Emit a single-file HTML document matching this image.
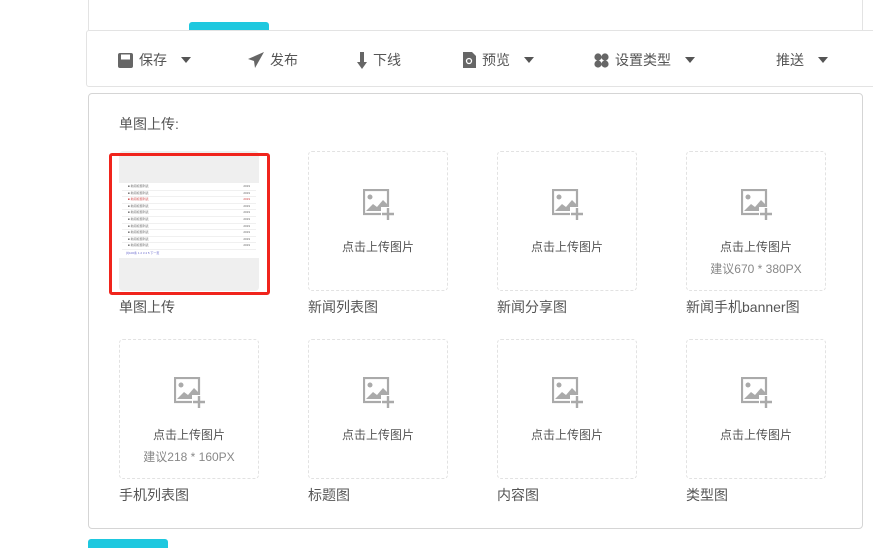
<!DOCTYPE html>
<html><head><meta charset="utf-8"><style>
*{margin:0;padding:0;box-sizing:border-box}
body{width:873px;height:548px;background:#fff;position:relative;overflow:hidden;font-family:"Liberation Sans","Noto Sans CJK SC",sans-serif;color:#555}
.abs{position:absolute}
.tb{position:absolute;top:30px;left:86px;width:800px;height:57px;border:1px solid #e3e3e3;border-radius:3px;background:#fff}
.tbi{position:absolute;top:20px;font-size:14px;color:#555;display:flex;align-items:center;gap:6px;height:18px}
.tri{width:0;height:0;border-left:5px solid transparent;border-right:5px solid transparent;border-top:6px solid #555;margin-left:8px}
.panel{position:absolute;left:88px;top:93px;width:775px;height:436px;border:1px solid #d5d5d5;border-radius:4px}
.tile{position:absolute;width:140px;height:140px;border:1px dashed #e2e2e2;border-radius:4px;text-align:center;font-size:12px;color:#555}
.tile svg{position:absolute;left:54px;top:37px}
.t1{position:absolute;left:0;right:0;top:86px}
.t2{position:absolute;left:0;right:0;top:108px;color:#888}
.lab{position:absolute;font-size:14px;color:#555}
.row{height:6.6px;border-bottom:1px solid #f0f0f0;display:flex;justify-content:space-between;font-size:3px;line-height:5px;padding:0 6px;color:#666;overflow:hidden}
</style></head><body>
<div class="abs" style="left:88px;top:0;width:775px;height:30px;border-left:1px solid #e3e3e3;border-right:1px solid #e3e3e3"></div>
<div class="abs" style="left:189px;top:22px;width:80px;height:9px;background:#1ec8df;border-radius:3px 3px 0 0"></div>
<div class="tb">
<div class="tbi" style="left:31px"><svg width="15" height="15"><rect x="0" y="0" width="15" height="15" rx="2" fill="#666"/><rect x="3" y="1.5" width="9" height="5" fill="#fff"/></svg>保存<span class="tri"></span></div>
<div class="tbi" style="left:161px"><svg width="16" height="16"><path d="M16 0L0 7l6 2 1 7z" fill="#666"/></svg>发布</div>
<div class="tbi" style="left:270px"><svg width="10" height="17"><rect x="3" y="0" width="4" height="11" fill="#666"/><path d="M0 10h10l-5 7z" fill="#666"/></svg>下线</div>
<div class="tbi" style="left:376px"><svg width="13" height="16"><path d="M0 0h9l4 4v12H0z" fill="#666"/><circle cx="6" cy="9" r="2.5" stroke="#fff" fill="none" stroke-width="1.3"/></svg>预览<span class="tri"></span></div>
<div class="tbi" style="left:507px"><svg width="15" height="15" fill="#666"><circle cx="4" cy="4" r="3.6"/><circle cx="11" cy="4" r="3.6"/><circle cx="4" cy="11" r="3.6"/><circle cx="11" cy="11" r="3.6"/></svg>设置类型<span class="tri"></span></div>
<div class="tbi" style="left:689px">推送<span class="tri"></span></div>
</div>
<div class="panel"></div>
<div class="lab" style="left:119px;top:114px">单图上传:</div>

<div class="abs" style="left:119px;top:151px;width:140px;height:140px;background:#fff;border-radius:4px;overflow:hidden">
<div style="height:32px;background:#efefef"></div>
<div style="padding:1px 3px 0">
<div class="row"><span>■ 新闻标题列表</span><span>2019</span></div>
<div class="row"><span>■ 新闻标题列表</span><span>2019</span></div>
<div class="row" style="color:#c44"><span>■ 新闻标题列表</span><span>2019</span></div>
<div class="row"><span>■ 新闻标题列表</span><span>2019</span></div>
<div class="row"><span>■ 新闻标题列表</span><span>2019</span></div>
<div class="row"><span>■ 新闻标题列表</span><span>2019</span></div>
<div class="row"><span>■ 新闻标题列表</span><span>2019</span></div>
<div class="row"><span>■ 新闻标题列表</span><span>2019</span></div>
<div class="row"><span>■ 新闻标题列表</span><span>2019</span></div>
<div class="row"><span>■ 新闻标题列表</span><span>2019</span></div>
<div style="font-size:3px;color:#66c;padding:1px 4px">共100条 1 2 3 4 5 下一页</div>
</div>
<div style="position:absolute;top:107px;left:0;right:0;bottom:0;background:#efefef"></div>
</div>
<div class="abs" style="left:109px;top:153px;width:161px;height:142px;border:3px solid #f0241c;border-radius:3px"></div>

<svg width="0" height="0" style="position:absolute"><defs><g id="ic"><rect x="1" y="1" width="24" height="24" fill="none" stroke="#aaa" stroke-width="2.2"/><circle cx="7" cy="8" r="2.5" fill="#aaa"/><path d="M3 22l7-7 4 3 6-7 4 4v7H3z" fill="#aaa"/><rect x="18" y="18" width="14" height="14" fill="#fff"/><path d="M25 19v12M19 25h12" stroke="#aaa" stroke-width="2.4"/></g></defs></svg>

<div class="tile" style="left:308px;top:151px"><svg width="32" height="32"><use href="#ic"/></svg><div class="t1">点击上传图片</div></div>
<div class="tile" style="left:497px;top:151px"><svg width="32" height="32"><use href="#ic"/></svg><div class="t1">点击上传图片</div></div>
<div class="tile" style="left:686px;top:151px"><svg width="32" height="32"><use href="#ic"/></svg><div class="t1">点击上传图片</div><div class="t2">建议670 * 380PX</div></div>
<div class="lab" style="left:119px;top:297px">单图上传</div>
<div class="lab" style="left:308px;top:297px">新闻列表图</div>
<div class="lab" style="left:497px;top:297px">新闻分享图</div>
<div class="lab" style="left:686px;top:297px">新闻手机banner图</div>

<div class="tile" style="left:119px;top:339px"><svg width="32" height="32"><use href="#ic"/></svg><div class="t1">点击上传图片</div><div class="t2">建议218 * 160PX</div></div>
<div class="tile" style="left:308px;top:339px"><svg width="32" height="32"><use href="#ic"/></svg><div class="t1">点击上传图片</div></div>
<div class="tile" style="left:497px;top:339px"><svg width="32" height="32"><use href="#ic"/></svg><div class="t1">点击上传图片</div></div>
<div class="tile" style="left:686px;top:339px"><svg width="32" height="32"><use href="#ic"/></svg><div class="t1">点击上传图片</div></div>
<div class="lab" style="left:119px;top:485px">手机列表图</div>
<div class="lab" style="left:308px;top:485px">标题图</div>
<div class="lab" style="left:497px;top:485px">内容图</div>
<div class="lab" style="left:686px;top:485px">类型图</div>

<div class="abs" style="left:88px;top:539px;width:80px;height:9px;background:#1ec8df;border-radius:3px 3px 0 0"></div>
</body></html>
